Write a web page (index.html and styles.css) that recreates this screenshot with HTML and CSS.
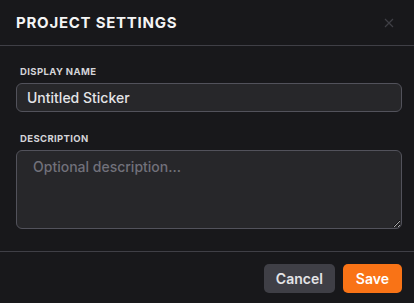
FILE: index.html
```html
<!DOCTYPE html>
<html lang="en">
<head>
    <meta charset="UTF-8">
    <meta name="viewport" content="width=device-width, initial-scale=1.0">
    <title>Project Settings</title>
    <link rel="stylesheet" href="styles.css">
</head>
<body>

    <div class="modal">
        <div class="modal-header">
            <div class="modal-title">Project Settings</div>
            <button class="close-btn" aria-label="Close">
                <svg width="10" height="10" viewBox="0 0 10 10">
                    <path d="M1 1 L9 9 M9 1 L1 9" stroke="currentColor" stroke-width="1.2" fill="none"/>
                </svg>
            </button>
        </div>

        <div class="modal-body">
            <div class="field">
                <label for="name">Display Name</label>
                <input id="name" type="text" value="Untitled Sticker">
            </div>
            <div class="field">
                <label for="desc">Description</label>
                <textarea id="desc" placeholder="Optional description..."></textarea>
            </div>
        </div>

        <div class="modal-footer">
            <button class="btn btn-cancel">Cancel</button>
            <button class="btn btn-save">Save</button>
        </div>
    </div>

</body>
</html>
```

FILE: styles.css
```css
/* Dark modal */
body {
    margin: 0;
    background-color: #18181b;
    font-family: 'Inter', 'Liberation Sans', sans-serif;
    color: #f4f4f5;
}

.modal {
    background-color: #18181b;
}

/* Header */
.modal-header {
    height: 45px;
    display: flex;
    align-items: center;
    justify-content: space-between;
    padding: 0 16px;
    border-bottom: 1px solid #3f3f46;
}

.modal-title {
    font-size: 15px;
    font-weight: 700;
    letter-spacing: 0.05em;
    text-transform: uppercase;
    color: #f4f4f5;
}

.close-btn {
    background: none;
    border: none;
    padding: 0;
    margin-right: 4px;
    color: #3f3f46;
    display: flex;
    cursor: pointer;
}

/* Body */
.modal-body {
    padding: 18px 12px 22px 16px;
    display: flex;
    flex-direction: column;
    gap: 19px;
}

.field {
    display: flex;
    flex-direction: column;
    gap: 4px;
}

.field label {
    font-size: 9.5px;
    line-height: 15px;
    font-weight: 700;
    letter-spacing: 0.04em;
    text-transform: uppercase;
    color: #d4d4d8;
    padding-left: 4px;
}

.field input,
.field textarea {
    box-sizing: border-box;
    width: 100%;
    background-color: #27272a;
    border: 1px solid #52525b;
    border-radius: 6px;
    color: #e4e4e7;
    font-family: inherit;
    font-size: 14px;
    font-weight: 500;
    outline: none;
}

.field input {
    height: 29px;
    padding: 0 10px;
}

.field textarea {
    height: 79px;
    padding: 7px 16px;
    resize: vertical;
}

.field textarea::placeholder {
    color: #71717a;
}

/* Footer */
.modal-footer {
    border-top: 1px solid #3f3f46;
    display: flex;
    justify-content: flex-end;
    gap: 8px;
    padding: 12px 12px 10px;
}

.btn {
    height: 29px;
    border: none;
    border-radius: 5px;
    font-family: inherit;
    font-size: 14px;
    font-weight: 600;
    padding: 0 12px;
    cursor: pointer;
}

.btn-cancel {
    background-color: #3f3f46;
    color: #e4e4e7;
}

.btn-save {
    background-color: #f97316;
    color: #ffffff;
    padding: 0 13px;
}
```
